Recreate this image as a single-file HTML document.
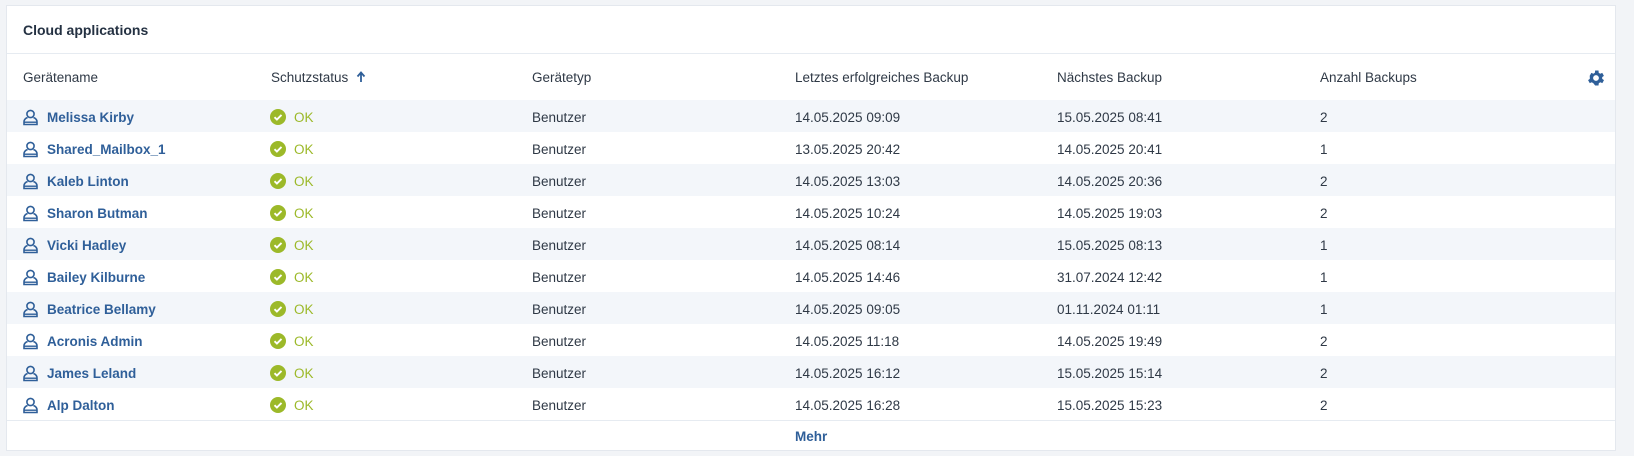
<!DOCTYPE html>
<html><head><meta charset="utf-8"><style>
html,body{margin:0;padding:0;width:1634px;height:456px;background:#f2f4f7;overflow:hidden;font-family:"Liberation Sans",sans-serif;}
.card{position:absolute;left:6px;top:5px;width:1610px;height:446px;background:#fff;border:1px solid #e4e8ee;box-sizing:border-box;}
.title{position:absolute;left:16px;top:16px;font-size:14px;color:#243142;font-weight:600;}
.hl{position:absolute;left:0;right:0;height:1px;background:#e6ebf1;}
.hdr{position:absolute;top:64px;font-size:13.5px;color:#2f3946;}
.row{position:absolute;left:0;width:1608px;height:32px;}
.row.s{background:#f3f6fa;}
.c{position:absolute;top:10px;font-size:13.5px;color:#2f3946;white-space:nowrap;}
.n{color:#2f5f99;font-weight:bold;left:40px;}
.ok{color:#9cb929;left:287px;}
.c1{left:525px}.c2{left:788px}.c3{left:1050px}.c4{left:1313px}
.mehr{position:absolute;left:788px;top:423px;color:#2f5f99;font-weight:bold;font-size:13.5px;}
</style></head><body>
<div class="card">
<div class="title">Cloud applications</div>
<div class="hl" style="top:47px"></div>
<div class="hdr" style="left:16px">Gerätename</div>
<div class="hdr" style="left:264px">Schutzstatus <svg width="10" height="12" viewBox="0 0 10 12" style="margin-left:4px;vertical-align:-1px"><path d="M5 11V2M1.5 5.5L5 1.5 8.5 5.5" stroke="#2f5f99" stroke-width="1.8" fill="none"/></svg></div>
<div class="hdr" style="left:525px">Gerätetyp</div>
<div class="hdr" style="left:788px">Letztes erfolgreiches Backup</div>
<div class="hdr" style="left:1050px">Nächstes Backup</div>
<div class="hdr" style="left:1313px">Anzahl Backups</div>
<svg style="position:absolute;left:1579px;top:62px" width="20" height="20" viewBox="0 0 24 24"><path fill="#2f5f99" d="M19.4 13a7.5 7.5 0 0 0 0-2l2.1-1.6-2-3.5-2.5 1a7.6 7.6 0 0 0-1.7-1L15 3h-4l-.4 2.9a7.6 7.6 0 0 0-1.7 1l-2.5-1-2 3.5L4.6 11a7.5 7.5 0 0 0 0 2l-2.1 1.6 2 3.5 2.5-1a7.6 7.6 0 0 0 1.7 1L11 21h4l.4-2.9a7.6 7.6 0 0 0 1.7-1l2.5 1 2-3.5zM12 15.5a3.5 3.5 0 1 1 0-7 3.5 3.5 0 0 1 0 7z"/></svg>
<div id="rows"></div>
<div class="hl" style="top:414px"></div>
<div class="mehr">Mehr</div>
</div>
<script>
var d=[["Melissa Kirby","14.05.2025 09:09","15.05.2025 08:41","2"],["Shared_Mailbox_1","13.05.2025 20:42","14.05.2025 20:41","1"],["Kaleb Linton","14.05.2025 13:03","14.05.2025 20:36","2"],["Sharon Butman","14.05.2025 10:24","14.05.2025 19:03","2"],["Vicki Hadley","14.05.2025 08:14","15.05.2025 08:13","1"],["Bailey Kilburne","14.05.2025 14:46","31.07.2024 12:42","1"],["Beatrice Bellamy","14.05.2025 09:05","01.11.2024 01:11","1"],["Acronis Admin","14.05.2025 11:18","14.05.2025 19:49","2"],["James Leland","14.05.2025 16:12","15.05.2025 15:14","2"],["Alp Dalton","14.05.2025 16:28","15.05.2025 15:23","2"]];
var h="";
var user='<svg style="position:absolute;left:16px;top:9px" width="15" height="17" viewBox="0 0 15 17"><circle cx="7.5" cy="5" r="3.6" fill="none" stroke="#2f5f99" stroke-width="1.6"/><path d="M4.5 8.5C2 9.5 1 11 1 13v2.5h13V13c0-2-1-3.5-3.5-4.5" fill="none" stroke="#2f5f99" stroke-width="1.6"/><path d="M1 13.2h13" stroke="#2f5f99" stroke-width="1.4"/></svg>';
var chk='<svg style="position:absolute;left:263px;top:9px" width="16" height="16" viewBox="0 0 16 16"><circle cx="8" cy="8" r="8" fill="#9cb929"/><path d="M4.5 8.2l2.4 2.3 4.6-4.6" stroke="#fff" stroke-width="1.9" fill="none"/></svg>';
d.forEach(function(r,i){h+='<div class="row'+(i%2==0?' s':'')+'" style="top:'+(94+i*32)+'px">'+user+'<div class="c n">'+r[0]+'</div>'+chk+'<div class="c ok">OK</div><div class="c c1">Benutzer</div><div class="c c2">'+r[1]+'</div><div class="c c3">'+r[2]+'</div><div class="c c4">'+r[3]+'</div></div>';});
document.getElementById("rows").innerHTML=h;
</script>
</body></html>
